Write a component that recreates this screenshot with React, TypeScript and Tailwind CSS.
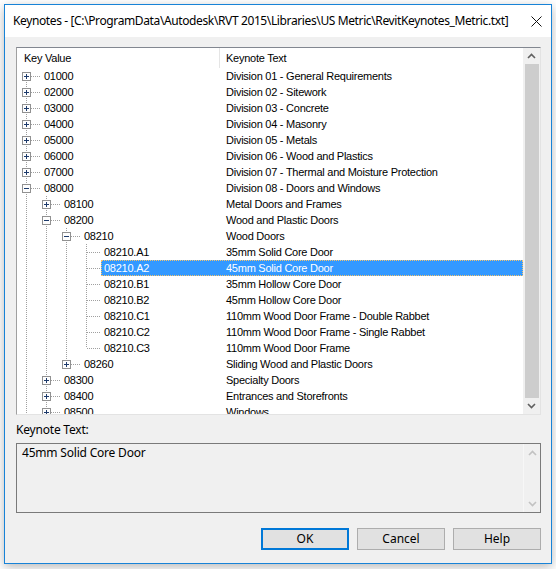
import React from 'react'

type Node = {
  depth: number
  key: string
  text: string
  kids?: 'open' | 'closed'
}

// Flattened view of the keynote tree as it is currently expanded
const rows: Node[] = [
  { depth: 0, key: '01000', text: 'Division 01 - General Requirements', kids: 'closed' },
  { depth: 0, key: '02000', text: 'Division 02 - Sitework', kids: 'closed' },
  { depth: 0, key: '03000', text: 'Division 03 - Concrete', kids: 'closed' },
  { depth: 0, key: '04000', text: 'Division 04 - Masonry', kids: 'closed' },
  { depth: 0, key: '05000', text: 'Division 05 - Metals', kids: 'closed' },
  { depth: 0, key: '06000', text: 'Division 06 - Wood and Plastics', kids: 'closed' },
  { depth: 0, key: '07000', text: 'Division 07 - Thermal and Moisture Protection', kids: 'closed' },
  { depth: 0, key: '08000', text: 'Division 08 - Doors and Windows', kids: 'open' },
  { depth: 1, key: '08100', text: 'Metal Doors and Frames', kids: 'closed' },
  { depth: 1, key: '08200', text: 'Wood and Plastic Doors', kids: 'open' },
  { depth: 2, key: '08210', text: 'Wood Doors', kids: 'open' },
  { depth: 3, key: '08210.A1', text: '35mm Solid Core Door' },
  { depth: 3, key: '08210.A2', text: '45mm Solid Core Door' },
  { depth: 3, key: '08210.B1', text: '35mm Hollow Core Door' },
  { depth: 3, key: '08210.B2', text: '45mm Hollow Core Door' },
  { depth: 3, key: '08210.C1', text: '110mm Wood Door Frame - Double Rabbet' },
  { depth: 3, key: '08210.C2', text: '110mm Wood Door Frame - Single Rabbet' },
  { depth: 3, key: '08210.C3', text: '110mm Wood Door Frame' },
  { depth: 2, key: '08260', text: 'Sliding Wood and Plastic Doors', kids: 'closed' },
  { depth: 1, key: '08300', text: 'Specialty Doors', kids: 'closed' },
  { depth: 1, key: '08400', text: 'Entrances and Storefronts', kids: 'closed' },
  { depth: 1, key: '08500', text: 'Windows', kids: 'closed' },
]

const SELECTED = '08210.A2'

// true when another node at `level` follows row i before the branch closes;
// the list is longer than the visible window, so open branches keep going
function continuesAt(i: number, level: number) {
  for (let j = i + 1; j < rows.length; j++) {
    if (rows[j].depth < level) return false
    if (rows[j].depth === level) return true
  }
  return level <= 1
}

const LINE = '#a0a0a0'

function Connectors({ index }: { index: number }) {
  const node = rows[index]
  const L = node.depth
  const w = 24 + 20 * L
  const parts: React.ReactNode[] = []

  for (let k = 0; k < L; k++) {
    if (continuesAt(index, k)) {
      const x = 9 + 20 * k + 0.5
      parts.push(<line key={'v' + k} x1={x} y1={0} x2={x} y2={16} stroke={LINE} strokeDasharray="1 1" />)
    }
  }

  const cx = 9 + 20 * L
  const x = cx + 0.5
  const first = index === 0
  const next = continuesAt(index, L)
  if (!first) parts.push(<line key="up" x1={x} y1={0} x2={x} y2={8} stroke={LINE} strokeDasharray="1 1" />)
  if (next) parts.push(<line key="down" x1={x} y1={8} x2={x} y2={16} stroke={LINE} strokeDasharray="1 1" />)
  parts.push(
    <line key="h" x1={cx + 1} y1={8.5} x2={w - 1} y2={8.5} stroke={LINE} strokeDasharray="1 1" />,
  )

  if (node.kids) {
    parts.push(
      <g key="box">
        <rect x={cx - 4 + 0.5} y={4.5} width={8} height={8} fill="#fdfdfd" stroke="#919191" />
        <line x1={cx - 2} y1={8.5} x2={cx + 3} y2={8.5} stroke="#1d3a6b" />
        {node.kids === 'closed' && (
          <line x1={cx + 0.5} y1={6} x2={cx + 0.5} y2={11} stroke="#1d3a6b" />
        )}
      </g>,
    )
  }

  return (
    <svg width={w} height={16} className="shrink-0 block">
      {parts}
    </svg>
  )
}

function Chevron({ up, color }: { up?: boolean; color: string }) {
  return (
    <svg width="9" height="6" viewBox="0 0 9 6">
      <path
        d={up ? 'M1 5 L4.5 1.5 L8 5' : 'M1 1 L4.5 4.5 L8 1'}
        fill="none"
        stroke={color}
        strokeWidth="1.6"
      />
    </svg>
  )
}

function TreeRow({ index }: { index: number }) {
  const node = rows[index]
  const selected = node.key === SELECTED
  return (
    <div className="flex h-[16px] shrink-0">
      <Connectors index={index} />
      <div
        className={
          selected
            ? 'flex flex-1 pl-[3px] bg-[#3399ff] text-white outline-1 outline-dotted outline-[#f5c36a] -outline-offset-1'
            : 'flex flex-1 pl-[3px] text-black'
        }
      >
        <span className="shrink-0 whitespace-nowrap" style={{ width: 182 - 20 * node.depth }}>
          {node.key}
        </span>
        <span className="whitespace-nowrap">{node.text}</span>
      </div>
    </div>
  )
}

export default function App() {
  return (
    <div className="w-[556px] h-[569px] bg-white pl-[4px] pt-[4px] overflow-hidden">
      <div className="w-[548px] h-[560px] border border-[#1883d7] bg-[#f0f0f0] flex flex-col shadow-[0_3px_10px_rgba(0,0,0,0.28)] font-['Noto_Sans',sans-serif] text-[12px] text-black">
        {/* Title bar */}
        <div className="h-[32px] bg-white flex items-center justify-between pl-[8px] pr-[9px] shrink-0">
          <span className="whitespace-nowrap tracking-[-0.38px]">
            Keynotes - [C:\ProgramData\Autodesk\RVT 2015\Libraries\US Metric\RevitKeynotes_Metric.txt]
          </span>
          <svg width="11" height="11" viewBox="0 0 11 11">
            <path d="M0.5 0.5 L10.5 10.5 M10.5 0.5 L0.5 10.5" stroke="#111" strokeWidth="1" />
          </svg>
        </div>

        <div className="flex flex-col px-[11px] pt-[10px]">
          {/* Keynote tree list */}
          <div className="h-[368px] w-[525px] border border-t-[#828790] border-l-[#a0a0a0] border-r-[#e3e3e3] border-b-[#e3e3e3] bg-white flex overflow-hidden">
            <div className="flex-1 flex flex-col overflow-hidden font-['Liberation_Sans',Arial,sans-serif] text-[11px] leading-[16px] tracking-[-0.25px]">
              <div className="flex h-[20px] shrink-0 items-center">
                <div className="w-[203px] h-full flex items-center pl-[7px] border-r border-[#e5e5e5]">Key Value</div>
                <div className="pl-[6px]">Keynote Text</div>
              </div>
              {rows.map((_, i) => (
                <TreeRow key={rows[i].key} index={i} />
              ))}
            </div>

            {/* Vertical scrollbar */}
            <div className="w-[17px] flex flex-col bg-[#f0f0f0] shrink-0">
              <div className="h-[17px] flex items-center justify-center">
                <Chevron up color="#606060" />
              </div>
              <div className="flex-1 flex flex-col">
                <div className="h-[334px] ml-[2px] mr-[1px] bg-[#cdcdcd]" />
              </div>
              <div className="h-[17px] flex items-center justify-center">
                <Chevron color="#606060" />
              </div>
            </div>
          </div>

          <div className="mt-[7px] h-[16px] leading-[16px] tracking-[-0.2px]">Keynote Text:</div>

          {/* Read-only text of the selected keynote */}
          <div className="mt-[5px] h-[70px] w-[525px] border border-[#7a7a7a] bg-[#f0f0f0] flex">
            <div className="flex-1 pl-[5px] pt-[1px] leading-[16px] tracking-[-0.2px]">45mm Solid Core Door</div>
            <div className="w-[17px] flex flex-col justify-between border-l border-[#f7f7f7]">
              <div className="h-[17px] flex items-center justify-center">
                <Chevron up color="#c2c2c2" />
              </div>
              <div className="h-[17px] flex items-center justify-center">
                <Chevron color="#c2c2c2" />
              </div>
            </div>
          </div>

          {/* Dialog buttons */}
          <div className="mt-[15px] flex justify-end gap-[8px] w-[525px]">
            <button className="w-[88px] h-[22px] bg-[#e1e1e1] border-2 border-[#0078d7] flex items-center justify-center">
              OK
            </button>
            <button className="w-[88px] h-[22px] bg-[#e1e1e1] border border-[#adadad] flex items-center justify-center">
              Cancel
            </button>
            <button className="w-[88px] h-[22px] bg-[#e1e1e1] border border-[#adadad] flex items-center justify-center">
              Help
            </button>
          </div>
        </div>
      </div>
    </div>
  )
}
